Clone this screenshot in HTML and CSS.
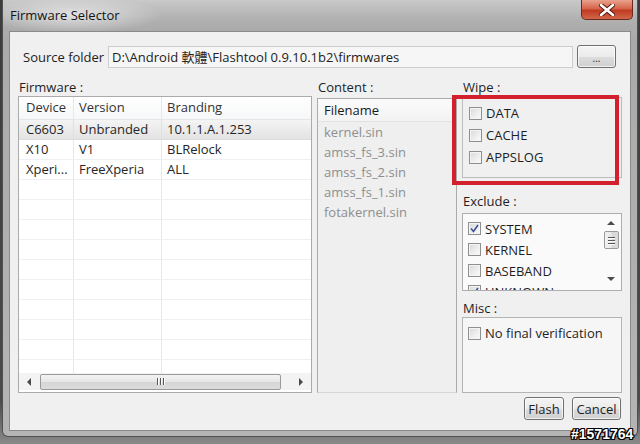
FILE: index.html
```html
<!DOCTYPE html>
<html>
<head>
<meta charset="utf-8">
<link rel="stylesheet" href="styles.css">
</head>
<body>
<div class="screen">
  <div class="window">
    <div class="titlebar">
      <span class="title">Firmware Selector</span>
      <div class="close">
        <svg width="16" height="12" viewBox="0 0 16 12">
          <path d="M2 1 L14 11 M14 1 L2 11" stroke="#5a1a10" stroke-width="4.6" stroke-linecap="round"/>
          <path d="M2 1 L14 11 M14 1 L2 11" stroke="#ffffff" stroke-width="2.6" stroke-linecap="round"/>
        </svg>
      </div>
    </div>
    <div class="client">
      <div class="source-row">
        <span class="src-label">Source folder</span>
        <div class="textfield">D:\Android 軟體\Flashtool 0.9.10.1b2\firmwares</div>
        <div class="btn browse">...</div>
      </div>
      <div class="main">
        <div class="col fw">
          <div class="label">Firmware :</div>
          <div class="table">
            <div class="thead">
              <div class="cell c1">Device</div>
              <div class="cell c2">Version</div>
              <div class="cell c3">Branding</div>
            </div>
            <div class="tbody">
              <div class="row sel"><div class="cell c1">C6603</div><div class="cell c2">Unbranded</div><div class="cell c3">10.1.1.A.1.253</div></div>
              <div class="row"><div class="cell c1">X10</div><div class="cell c2">V1</div><div class="cell c3">BLRelock</div></div>
              <div class="row"><div class="cell c1">Xperi...</div><div class="cell c2">FreeXperia</div><div class="cell c3">ALL</div></div>
              <div class="row"><div class="cell c1"></div><div class="cell c2"></div><div class="cell c3"></div></div>
              <div class="row"><div class="cell c1"></div><div class="cell c2"></div><div class="cell c3"></div></div>
              <div class="row"><div class="cell c1"></div><div class="cell c2"></div><div class="cell c3"></div></div>
              <div class="row"><div class="cell c1"></div><div class="cell c2"></div><div class="cell c3"></div></div>
              <div class="row"><div class="cell c1"></div><div class="cell c2"></div><div class="cell c3"></div></div>
              <div class="row"><div class="cell c1"></div><div class="cell c2"></div><div class="cell c3"></div></div>
              <div class="row"><div class="cell c1"></div><div class="cell c2"></div><div class="cell c3"></div></div>
              <div class="row"><div class="cell c1"></div><div class="cell c2"></div><div class="cell c3"></div></div>
              <div class="row"><div class="cell c1"></div><div class="cell c2"></div><div class="cell c3"></div></div>
              <div class="row"><div class="cell c1"></div><div class="cell c2"></div><div class="cell c3"></div></div>
            </div>
            <div class="hscroll">
              <div class="harrow"><span class="tri-left"></span></div>
              <div class="hthumb"><span class="grip-v"></span><span class="grip-v"></span><span class="grip-v"></span></div>
              <div class="htrack"></div>
              <div class="harrow"><span class="tri-right"></span></div>
            </div>
          </div>
        </div>
        <div class="col content">
          <div class="label">Content :</div>
          <div class="list">
            <div class="lhead">Filename</div>
            <div class="litem">kernel.sin</div>
            <div class="litem">amss_fs_3.sin</div>
            <div class="litem">amss_fs_2.sin</div>
            <div class="litem">amss_fs_1.sin</div>
            <div class="litem">fotakernel.sin</div>
          </div>
        </div>
        <div class="col right">
          <div class="label">Wipe :</div>
          <div class="group wipe">
            <div class="check"><span class="cb"></span>DATA</div>
            <div class="check"><span class="cb"></span>CACHE</div>
            <div class="check"><span class="cb"></span>APPSLOG</div>
          </div>
          <div class="label exclude-label">Exclude :</div>
          <div class="group exclude">
            <div class="ex-items">
              <div class="check ex"><span class="cb"><svg width="11" height="11" viewBox="0 0 11 11"><path d="M2 5.5 L4.5 8.5 L9 2" fill="none" stroke="#3b4f9a" stroke-width="1.6"/></svg></span>SYSTEM</div>
              <div class="check ex"><span class="cb"></span>KERNEL</div>
              <div class="check ex"><span class="cb"></span>BASEBAND</div>
              <div class="check ex"><span class="cb"><svg width="11" height="11" viewBox="0 0 11 11"><path d="M2 5.5 L4.5 8.5 L9 2" fill="none" stroke="#3b4f9a" stroke-width="1.6"/></svg></span>UNKNOWN</div>
            </div>
            <div class="vscroll">
              <span class="tri-up"></span>
              <div class="vthumb"><span class="grip-h"></span><span class="grip-h"></span><span class="grip-h"></span></div>
              <div class="vtrack"></div>
              <span class="tri-down"></span>
            </div>
          </div>
          <div class="label misc-label">Misc :</div>
          <div class="group misc">
            <div class="check"><span class="cb"></span>No final verification</div>
          </div>
        </div>
      </div>
      <div class="buttons">
        <div class="btn flash">Flash</div>
        <div class="btn cancel">Cancel</div>
      </div>
      <div class="highlight"></div>
    </div>
  </div>
  <div class="watermark">#1571764</div>
</div>
</body>
</html>
```
FILE: styles.css
```css
* { box-sizing: border-box; }
body {
  margin: 0;
  background: #5a5a5a;
  font-family: "Open Sans", "Noto Sans CJK TC", sans-serif;
}
.screen {
  position: relative;
  width: 640px;
  height: 444px;
  overflow: hidden;
  background: linear-gradient(180deg, #3c3c3c 0%, #4a4a4a 90%, #8a8a8a 100%);
}
.window {
  margin-left: 2px;
  width: 636px;
  height: 437px;
  border: 1px solid #505050;
  border-top: 0;
  border-radius: 0 0 6px 6px;
  background: linear-gradient(180deg, #bdbdbd 0px, #aaaaaa 40px, #b4b4b4 100%);
  display: flex;
  flex-direction: column;
}
.titlebar {
  height: 31px;
  flex: none;
  display: flex;
  justify-content: space-between;
  align-items: flex-start;
  padding-left: 7px;
  background:
    radial-gradient(ellipse 90px 18px at 70px 15px, rgba(240,240,240,0.75), rgba(240,240,240,0) 100%),
    linear-gradient(180deg, #c9c9c9 0%, #b1b1b1 60%, #aaaaaa 100%);
}
.title {
  font-size: 13px;
  line-height: 30px;
  color: #141414;
}
.close {
  width: 52px;
  height: 20px;
  margin-right: 4px;
  border: 1px solid #6a2a1e;
  border-top: 0;
  border-radius: 0 0 5px 5px;
  background: linear-gradient(180deg, #e8a28e 0%, #d6644a 45%, #bf3b22 55%, #d2674a 100%);
  display: flex;
  align-items: center;
  justify-content: center;
}
.client {
  position: relative;
  margin: 0 6px;
  height: 400px;
  background: #f0f0f0;
  border: 1px solid #8a8a8a;
  display: flex;
  flex-direction: column;
  font-size: 13px;
  color: #1e1e1e;
}
.source-row {
  display: flex;
  align-items: center;
  margin: 13px 13px 0 13px;
  height: 23px;
}
.src-label {
  width: 85px;
  flex: none;
  white-space: nowrap;
}
.textfield {
  width: 465px;
  height: 22px;
  flex: none;
  border: 1px solid #cdcdcd;
  background: #f6f6f6;
  padding-left: 3px;
  line-height: 20px;
  color: #222;
  white-space: nowrap;
  overflow: hidden;
}
.btn {
  height: 23px;
  border: 1px solid #707070;
  border-radius: 3px;
  background: linear-gradient(180deg, #f4f4f4 0%, #ebebeb 50%, #dddddd 51%, #cfcfcf 100%);
  box-shadow: inset 0 0 0 1px rgba(255,255,255,0.7);
  display: flex;
  align-items: center;
  justify-content: center;
  color: #1e1e1e;
}
.browse {
  width: 39px;
  margin-left: 4px;
  font-size: 10px;
  line-height: 10px;
  padding-top: 2px;
}
.main {
  display: flex;
  gap: 5px;
  margin: 11px 0 0 8px;
  height: 314px;
}
.col {
  display: flex;
  flex-direction: column;
}
.label {
  height: 17px;
  line-height: 17px;
  padding-left: 1px;
  color: #1e1e1e;
  flex: none;
}
.fw { width: 294px; }
.table {
  height: 297px;
  border: 1px solid #ababab;
  background: #ffffff;
  display: flex;
  flex-direction: column;
}
.thead {
  height: 23px;
  flex: none;
  display: flex;
  border-bottom: 1px solid #e5e5e5;
  background: linear-gradient(180deg, #ffffff, #f6f7f8);
  line-height: 21px;
  color: #333;
}
.cell {
  height: 100%;
  white-space: nowrap;
  overflow: hidden;
}
.c1 { width: 55px; padding-left: 7px; border-right: 1px solid #e4e8ec; flex: none; }
.c2 { width: 88px; padding-left: 5px; border-right: 1px solid #e4e8ec; flex: none; }
.c3 { flex: 1; padding-left: 5px; }
.tbody {
  height: 253px;
  flex: none;
  overflow: hidden;
}
.row {
  height: 20px;
  display: flex;
  border-bottom: 1px solid #eef0f3;
  line-height: 19px;
  color: #262626;
}
.row.sel {
  background: linear-gradient(180deg, #f4f4f4 0%, #e3e3e3 100%);
  border-bottom-color: #dcdcdc;
}
.row.sel .cell { border-right-color: #e0e0e0; }
.hscroll {
  height: 17px;
  flex: none;
  display: flex;
  align-items: center;
  background: #f3f3f3;
}
.harrow {
  width: 20px;
  height: 17px;
  flex: none;
  display: flex;
  align-items: center;
  justify-content: center;
}
.tri-left {
  width: 0; height: 0;
  border-top: 4px solid transparent;
  border-bottom: 4px solid transparent;
  border-right: 4px solid #4a4a4a;
}
.tri-right {
  width: 0; height: 0;
  border-top: 4px solid transparent;
  border-bottom: 4px solid transparent;
  border-left: 4px solid #4a4a4a;
}
.hthumb {
  width: 241px;
  height: 16px;
  margin-left: 1px;
  border: 1px solid #9a9a9a;
  border-radius: 2px;
  background: linear-gradient(180deg, #f3f3f3 0%, #e6e6e6 50%, #d6d6d6 51%, #dcdcdc 100%);
  display: flex;
  align-items: center;
  justify-content: center;
  gap: 2px;
}
.grip-v {
  width: 1px;
  height: 7px;
  background: #555;
  box-shadow: 1px 0 0 #fff;
}
.htrack { flex: 1; }
.content { width: 140px; }
.content .label { height: 19px; }
.list {
  height: 295px;
  border: 1px solid #ababab;
  border-bottom-color: #d6d6d6;
  background: #efefef;
  overflow: hidden;
}
.lhead {
  height: 23px;
  line-height: 22px;
  padding-left: 6px;
  background: linear-gradient(180deg, #fbfbfb, #f3f3f3);
  border-bottom: 1px solid #e2e2e2;
  color: #1a1a1a;
}
.litem {
  height: 20px;
  line-height: 20px;
  padding-left: 6px;
  color: #8e8e8e;
}
.right { width: 160px; }
.group {
  border: 1px solid #bcbcbc;
  flex: none;
}
.wipe {
  height: 81px;
  margin-top: 1px;
  padding: 4px 0 0 6px;
}
.check {
  height: 22px;
  display: flex;
  align-items: center;
  gap: 4px;
  color: #1e1e1e;
  white-space: nowrap;
}
.cb {
  width: 13px;
  height: 13px;
  flex: none;
  border: 1px solid #8e8f8f;
  background: linear-gradient(135deg, #d8d8d8 0%, #efefef 60%, #fbfbfb 100%);
  box-shadow: inset 0 0 0 1px #f4f4f4;
  display: flex;
  align-items: center;
  justify-content: center;
}
.exclude-label { margin-top: 15px; }
.exclude {
  height: 78px;
  margin-top: 3px;
  background: #fafafa;
  display: flex;
  overflow: hidden;
  border-color: #aeaeae;
}
.ex-items {
  flex: 1;
  padding: 4px 0 0 5px;
}
.check.ex { height: 21px; }
.vscroll {
  width: 16px;
  margin-right: 2px;
  flex: none;
  display: flex;
  flex-direction: column;
  align-items: center;
  padding-top: 7px;
}
.tri-up {
  width: 0; height: 0;
  border-left: 4px solid transparent;
  border-right: 4px solid transparent;
  border-bottom: 4px solid #4a4a4a;
}
.tri-down {
  width: 0; height: 0;
  border-left: 4px solid transparent;
  border-right: 4px solid transparent;
  border-top: 4px solid #4a4a4a;
  margin-bottom: 9px;
}
.vthumb {
  width: 15px;
  height: 18px;
  margin-top: 6px;
  border: 1px solid #9a9a9a;
  border-radius: 2px;
  background: linear-gradient(90deg, #f3f3f3 0%, #e6e6e6 50%, #d6d6d6 51%, #dcdcdc 100%);
  display: flex;
  flex-direction: column;
  align-items: center;
  justify-content: center;
  gap: 2px;
}
.grip-h {
  width: 7px;
  height: 1px;
  background: #555;
  box-shadow: 0 1px 0 #fff;
}
.vtrack { flex: 1; }
.misc-label { margin-top: 9px; }
.misc {
  height: 76px;
  background: #f6f6f6;
  padding: 4px 0 0 5px;
  border-color: #b4b4b4;
}
.buttons {
  display: flex;
  justify-content: flex-end;
  gap: 8px;
  margin-top: 4px;
  padding-right: 9px;
}
.flash { width: 40px; }
.cancel { width: 49px; }
.highlight {
  position: absolute;
  left: 442px;
  top: 63px;
  width: 167px;
  height: 90px;
  border: 4px solid #d2202d;
}
.watermark {
  position: absolute;
  left: 571px;
  top: 426px;
  font-family: "Liberation Sans", sans-serif;
  font-weight: bold;
  font-size: 14px;
  line-height: 16px;
  color: #ffffff;
  text-shadow: 1px 0 0 #000, -1px 0 0 #000, 0 1px 0 #000, 0 -1px 0 #000, 1px 1px 0 #000, -1px -1px 0 #000, 1px -1px 0 #000, -1px 1px 0 #000;
}
```
